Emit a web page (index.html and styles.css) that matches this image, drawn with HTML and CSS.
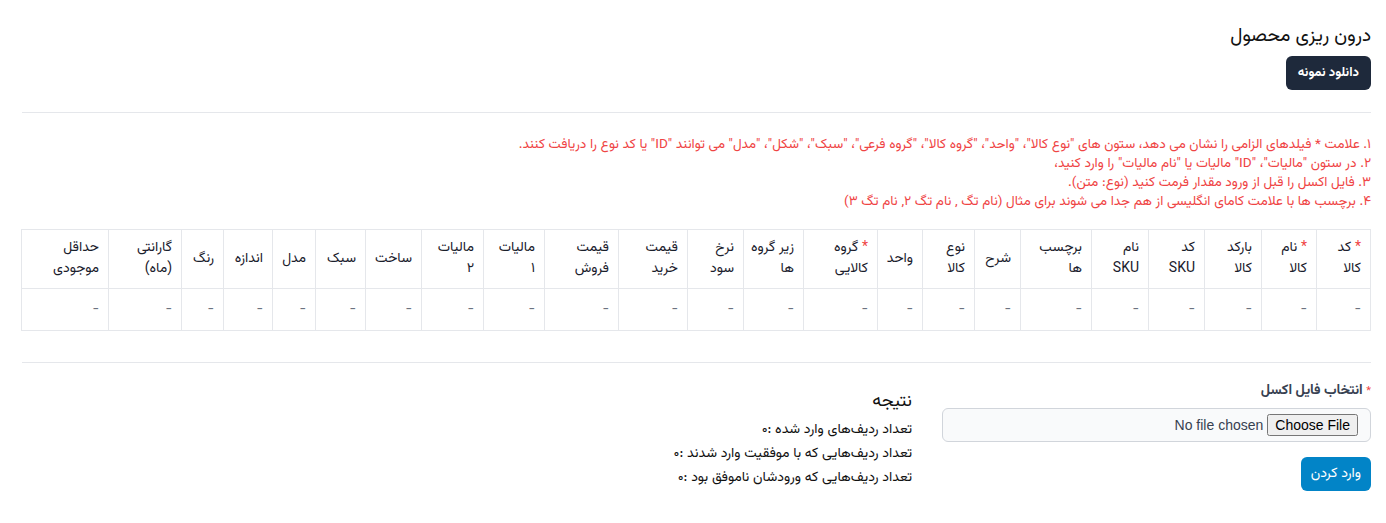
FILE: index.html
```html
<!DOCTYPE html>
<html lang="fa" dir="rtl">
<head>
<meta charset="utf-8">
<title>درون ریزی محصول</title>
<link rel="stylesheet" href="styles.css">
</head>
<body>
<div class="page">
  <h1 class="title">درون ریزی محصول</h1>
  <button class="btn btn-dark" type="button">دانلود نمونه</button>
  <hr class="sep sep-top">
  <div class="notes">
    <div>۱. علامت * فیلدهای الزامی را نشان می دهد، ستون های "نوع کالا"، "واحد"، "گروه کالا"، "گروه فرعی"، "سبک"، "شکل"، "مدل" می توانند "ID" یا کد نوع را دریافت کنند.</div>
    <div>۲. در ستون "مالیات"، "ID" مالیات یا "نام مالیات" را وارد کنید،</div>
    <div>۳. فایل اکسل را قبل از ورود مقدار فرمت کنید (نوع: متن).</div>
    <div>۴. برچسب ها با علامت کامای انگلیسی از هم جدا می شوند برای مثال (نام تگ , نام تگ ۲, نام تگ ۳)</div>
  </div>
  <table class="sample">
    <thead>
      <tr>
        <th><span class="req">*</span> کد<br>کالا</th>
        <th><span class="req">*</span> نام<br>کالا</th>
        <th>بارکد<br>کالا</th>
        <th>کد<br>SKU</th>
        <th>نام<br>SKU</th>
        <th>برچسب<br>ها</th>
        <th>شرح</th>
        <th>نوع<br>کالا</th>
        <th>واحد</th>
        <th><span class="req">*</span> گروه<br>کالایی</th>
        <th>زیر گروه<br>ها</th>
        <th>نرخ<br>سود</th>
        <th>قیمت<br>خرید</th>
        <th>قیمت<br>فروش</th>
        <th>مالیات<br>۱</th>
        <th>مالیات<br>۲</th>
        <th>ساخت</th>
        <th>سبک</th>
        <th>مدل</th>
        <th>اندازه</th>
        <th>رنگ</th>
        <th>گارانتی<br>(ماه)</th>
        <th>حداقل<br>موجودی</th>
      </tr>
    </thead>
    <tbody>
      <tr>
        <td>-</td><td>-</td><td>-</td><td>-</td><td>-</td><td>-</td><td>-</td><td>-</td><td>-</td><td>-</td><td>-</td><td>-</td><td>-</td><td>-</td><td>-</td><td>-</td><td>-</td><td>-</td><td>-</td><td>-</td><td>-</td><td>-</td><td>-</td>
      </tr>
    </tbody>
  </table>
  <hr class="sep sep-bottom">
  <div class="import">
    <form class="upload">
      <label class="field-label" for="file"><span class="req">*</span> انتخاب فایل اکسل</label>
      <div class="file-box"><input id="file" type="file" class="file-input"></div>
      <button class="btn btn-blue" type="button">وارد کردن</button>
    </form>
    <div class="result">
      <h2 class="result-title">نتیجه</h2>
      <p>تعداد ردیف‌های وارد شده :۰</p>
      <p>تعداد ردیف‌هایی که با موفقیت وارد شدند :۰</p>
      <p>تعداد ردیف‌هایی که ورودشان ناموفق بود :۰</p>
    </div>
  </div>
</div>
</body>
</html>
```

FILE: styles.css
```css
* { box-sizing: border-box; }
html, body { margin: 0; background: #fff; }
body {
  font-family: "Vazirmatn", "Noto Sans Arabic", "Noto Naskh Arabic", "DejaVu Sans", sans-serif;
  color: #212529;
  font-size: 14px;
}
.page {
  padding: 23px 15px 0 22px;
}
.title {
  margin: 0 0 6px;
  font-size: 19px;
  line-height: 27px;
  font-weight: 400;
  color: #111;
}
.btn {
  border: 0;
  height: 34px;
  padding: 0 12px;
  border-radius: 6px;
  font-family: inherit;
  font-size: 13px;
  font-weight: 700;
  color: #fff;
  cursor: pointer;
}
.btn-dark { background: #1e293b; }
.btn-blue {
  background: #0284c7;
  font-weight: 400;
  font-size: 14px;
  padding: 0 10px;
  margin-top: 15px;
}
.sep {
  border: 0;
  border-top: 1px solid #e5e7eb;
  margin: 0;
}
.sep-top { margin-top: 22px; }
.notes {
  margin-top: 22px;
  color: #ef4444;
  font-size: 13.6px;
  line-height: 19px;
}
.notes div { padding: 0; }
.sample {
  margin-top: 18px;
  width: 100%;
  border-collapse: collapse;
  table-layout: fixed;
  border: 1px solid #e5e7eb;
}
.sample th, .sample td {
  border: 1px solid #e5e7eb;
  text-align: right;
  vertical-align: middle;
  padding: 8px 9px;
  line-height: 21px;
  font-size: 14px;
}
.sample th { font-weight: 400; color: #1a202c; white-space: nowrap; }
.sample td { color: #6b7280; padding: 10px 9px; }
.sample th:nth-child(1) { width: 54px; }
.sample th:nth-child(2) { width: 55px; }
.sample th:nth-child(3) { width: 57px; }
.sample th:nth-child(4) { width: 56px; }
.sample th:nth-child(5) { width: 57px; }
.sample th:nth-child(6) { width: 71px; }
.sample th:nth-child(7) { width: 46px; }
.sample th:nth-child(8) { width: 52px; }
.sample th:nth-child(9) { width: 45px; }
.sample th:nth-child(10) { width: 74px; }
.sample th:nth-child(11) { width: 60px; }
.sample th:nth-child(12) { width: 56px; }
.sample th:nth-child(13) { width: 69px; }
.sample th:nth-child(14) { width: 74px; }
.sample th:nth-child(15) { width: 61px; }
.sample th:nth-child(16) { width: 62px; }
.sample th:nth-child(17) { width: 56px; }
.sample th:nth-child(18) { width: 50px; }
.sample th:nth-child(19) { width: 43px; }
.sample th:nth-child(20) { width: 49px; }
.sample th:nth-child(21) { width: 42px; }
.sample th:nth-child(22) { width: 73px; }
.sample th:nth-child(23) { width: 87px; }
.req { color: #ef4444; }
.sep-bottom { margin-top: 31px; }
.import {
  display: flex;
  gap: 30px;
  margin-top: 18px;
}
.upload {
  width: 429px;
  flex: none;
  display: flex;
  flex-direction: column;
  align-items: flex-start;
}
.field-label {
  font-weight: 700;
  font-size: 14px;
  line-height: 20px;
  color: #374151;
}
.field-label .req { font-weight: 400; font-size: 11px; }
.file-box {
  margin-top: 6px;
  width: 100%;
  height: 34px;
  border: 1px solid #d1d5db;
  border-radius: 6px;
  background: #f9fafb;
  display: flex;
  align-items: center;
  padding: 0 12px;
}
.file-input {
  font-family: "Liberation Sans", Arial, sans-serif;
  font-size: 14px;
  color: #374151;
}
.result { flex: 1; }
.result-title {
  margin: 9px 0 4px;
  font-size: 18px;
  line-height: 24px;
  font-weight: 400;
  color: #111;
}
.result p {
  margin: 0;
  line-height: 24px;
  font-size: 14px;
  color: #111;
}
```
